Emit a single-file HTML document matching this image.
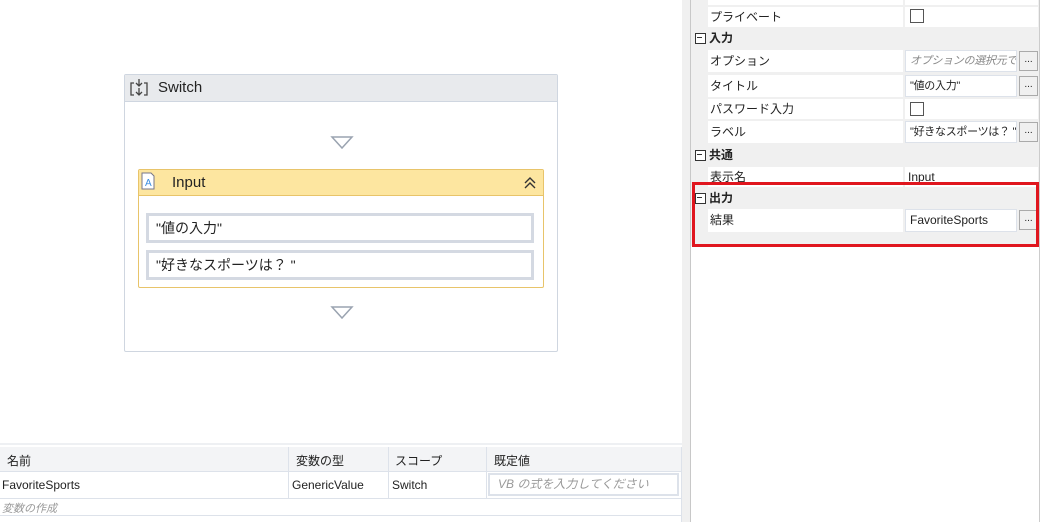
<!DOCTYPE html>
<html><head><meta charset="utf-8"><style>
*{box-sizing:border-box;margin:0;padding:0}
body{width:1050px;height:522px;background:#fff;position:relative;overflow:hidden;font-family:"Liberation Sans","Noto Sans CJK JP",sans-serif;font-size:12px;color:#222}
.a{position:absolute}
.t{white-space:nowrap}
.lbl{position:absolute;left:708px;width:195px;background:#fff;padding-left:2px;line-height:20px}
.val{position:absolute;left:905px;width:112px;background:#fff;border:1px solid #dde2ea;padding-left:4px;line-height:18px;overflow:hidden;white-space:nowrap;font-size:11px;letter-spacing:-0.3px}
.btn{position:absolute;left:1019px;width:19px;height:20px;border:1px solid #aaa;background:#f0f0f0;font-size:10px;text-align:center;line-height:16px}
.hdr{position:absolute;left:691px;width:348px;height:20px;background:#f0f0f0;font-weight:bold;line-height:20px;padding-left:18px}
.hdr:before{content:"";position:absolute;left:4px;top:5px;width:9px;height:9px;border:1px solid #333;background:#fff}
.hdr:after{content:"";position:absolute;left:6px;top:9px;width:5px;height:1px;background:#333}
.cb{position:absolute;left:910px;width:14px;height:14px;border:1px solid #555;background:#fff}
</style></head><body>
<div class="a" style="left:682px;top:0;width:9px;height:522px;background:#f0f0f0;border-right:1px solid #c8c8c8"></div>
<div class="a" style="left:691px;top:0;width:348px;height:522px;background:#f0f0f0"></div>
<div class="a" style="left:1039px;top:0;width:1px;height:522px;background:#ccc"></div>
<div class="a" style="left:691px;top:246px;width:348px;height:276px;background:#fff"></div>
<div class="lbl" style="top:0;height:5px"></div><div class="a" style="left:905px;top:0;width:133px;height:5px;background:#fff"></div>
<div class="lbl t" style="top:7px">プライベート</div><div class="a" style="left:905px;top:7px;width:133px;height:20px;background:#fff"></div><div class="cb" style="top:9px"></div>
<div class="hdr" style="top:28px">入力</div>
<div class="lbl t" style="top:50px;height:22px;line-height:22px">オプション</div><div class="val" style="top:50px;height:22px;line-height:20px;color:#888;font-style:italic">オプションの選択元で</div><div class="btn" style="top:51px">...</div>
<div class="lbl t" style="top:75px;height:22px;line-height:22px">タイトル</div><div class="val" style="top:75px;height:22px;line-height:20px">"値の入力"</div><div class="btn" style="top:76px">...</div>
<div class="lbl t" style="top:99px">パスワード入力</div><div class="a" style="left:905px;top:99px;width:133px;height:20px;background:#fff"></div><div class="cb" style="top:102px"></div>
<div class="lbl t" style="top:121px;height:22px;line-height:22px">ラベル</div><div class="val" style="top:121px;height:22px;line-height:20px">"好きなスポーツは？ "</div><div class="btn" style="top:122px">...</div>
<div class="hdr" style="top:145px">共通</div>
<div class="lbl t" style="top:167px">表示名</div><div class="a t" style="left:905px;top:167px;width:133px;height:20px;background:#fff;line-height:20px;padding-left:3px">Input</div>
<div class="hdr" style="top:188px">出力</div>
<div class="lbl t" style="top:209px;height:23px;line-height:23px">結果</div><div class="val" style="top:209px;height:23px;line-height:21px;font-size:12px;letter-spacing:0">FavoriteSports</div><div class="btn" style="top:210px">...</div>
<div class="a" style="left:692px;top:182px;width:347px;height:65px;border:3px solid #e0161e"></div>
<div class="a" style="left:124px;top:74px;width:434px;height:278px;border:1px solid #cfd6e0;border-radius:2px;background:#fff"></div>
<div class="a" style="left:125px;top:75px;width:432px;height:27px;background:#e8eaed;border-bottom:1px solid #cfd6e0"></div>
<svg class="a" style="left:129px;top:78px" width="20" height="20" viewBox="0 0 20 20" fill="none" stroke="#444" stroke-width="1.3"><path d="M5 5H2v12h3M15 5h3v12h-3"/><path d="M10 1v7M7 5l3 3 3-3M10 10v7M7 14l3 3 3-3" /></svg>
<div class="a t" style="left:158px;top:78px;font-size:15px;line-height:20px">Switch</div>
<svg class="a" style="left:330px;top:135px" width="24" height="16"><path d="M2 2H22L12 13Z" fill="none" stroke="#9aa3b0" stroke-width="1.5"/></svg>
<svg class="a" style="left:330px;top:305px" width="24" height="16"><path d="M2 2H22L12 13Z" fill="none" stroke="#9aa3b0" stroke-width="1.5"/></svg>
<div class="a" style="left:138px;top:169px;width:406px;height:119px;border:1px solid #e8c46a;border-radius:2px;background:#fff"></div>
<div class="a" style="left:139px;top:170px;width:404px;height:26px;background:#fde6a0;border-bottom:1px solid #e8c46a"></div>
<svg class="a" style="left:140px;top:172px" width="16" height="18"><path d="M2 1h9l3 3v13H2Z" fill="#fff" stroke="#778"/><text x="5" y="14" font-size="10" fill="#3a8de0" font-family="Liberation Sans">A</text></svg>
<div class="a t" style="left:172px;top:173px;font-size:15px;line-height:20px">Input</div>
<svg class="a" style="left:522px;top:174px" width="16" height="16" fill="none" stroke="#333" stroke-width="1.4"><path d="M3 9l5-5 5 5M3 14l5-5 5 5"/></svg>
<div class="a t" style="left:146px;top:213px;width:388px;height:30px;border:3px solid #d4d9e2;padding-left:7px;line-height:24px;font-size:14px">"値の入力"</div>
<div class="a t" style="left:146px;top:250px;width:388px;height:30px;border:3px solid #d4d9e2;padding-left:7px;line-height:24px;font-size:14px">"好きなスポーツは？ "</div>
<div class="a" style="left:0;top:443px;width:682px;height:79px;background:#fff;border-top:2px solid #eef0f3"></div>
<div class="a" style="left:0;top:447px;width:682px;height:25px;background:#f3f4f6;border-bottom:1px solid #dde2ea"></div>
<div class="a t" style="left:7px;top:452px">名前</div>
<div class="a t" style="left:296px;top:452px">変数の型</div>
<div class="a t" style="left:395px;top:452px">スコープ</div>
<div class="a t" style="left:494px;top:452px">既定値</div>
<div class="a" style="left:288px;top:447px;width:1px;height:51px;background:#dde2ea"></div>
<div class="a" style="left:388px;top:447px;width:1px;height:51px;background:#dde2ea"></div>
<div class="a" style="left:486px;top:447px;width:1px;height:51px;background:#dde2ea"></div>
<div class="a" style="left:681px;top:447px;width:1px;height:75px;background:#dde2ea"></div>
<div class="a t" style="left:2px;top:478px">FavoriteSports</div>
<div class="a t" style="left:292px;top:478px">GenericValue</div>
<div class="a t" style="left:392px;top:478px">Switch</div>
<div class="a t" style="left:488px;top:473px;width:191px;height:23px;border:2px solid #dde2ea;padding-left:8px;line-height:19px;color:#999;font-style:italic">VB の式を入力してください</div>
<div class="a" style="left:0;top:498px;width:682px;height:1px;background:#dde2ea"></div>
<div class="a t" style="left:2px;top:500px;font-size:11px;color:#999;font-style:italic">変数の作成</div>
<div class="a" style="left:0;top:515px;width:682px;height:1px;background:#dde2ea"></div>
</body></html>
